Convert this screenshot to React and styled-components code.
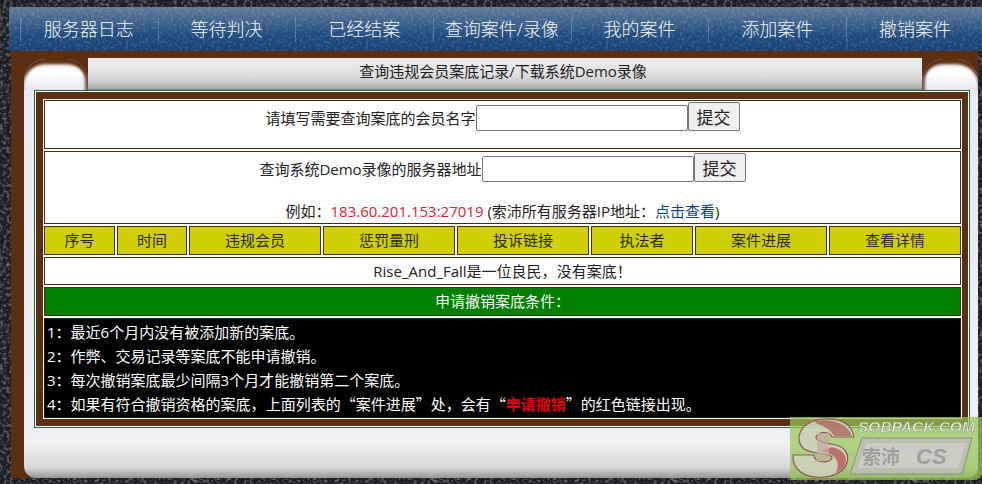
import React from "react";
import styled, { createGlobalStyle } from "styled-components";

const COLON = "\uFF1A";
const COMMA = "\uFF0C";
const BANG = "\uFF01";

const noise = (freq, alpha) =>
  `url("data:image/svg+xml,%3Csvg xmlns='http://www.w3.org/2000/svg' width='240' height='240'%3E%3Cfilter id='n'%3E%3CfeTurbulence type='fractalNoise' baseFrequency='${freq}' numOctaves='2' stitchTiles='stitch'/%3E%3CfeColorMatrix values='0 0 0 0 1 0 0 0 0 1 0 0 0 0 1 0 0 0 ${alpha} ${-alpha / 2.2}'/%3E%3C/filter%3E%3Crect width='240' height='240' filter='url(%23n)'/%3E%3C/svg%3E")`;

const GlobalStyle = createGlobalStyle`
  html, body {
    margin: 0;
    padding: 0;
  }
  body {
    background-color: #1d1d24;
    background-image: ${noise(0.3, 1)};
    font-family: "Open Sans", "Noto Sans CJK SC", sans-serif;
    font-size: 15px;
    color: #222;
  }
`;

const Page = styled.div`
  position: relative;
  width: 982px;
  height: 484px;
  overflow: hidden;
  padding: 7px 0 0 9px;
  box-sizing: border-box;
`;

const Nav = styled.nav`
  height: 44px;
  padding-left: 11px;
  display: grid;
  grid-template-columns: repeat(7, 137.7px);
  align-items: center;
  overflow: hidden;
  background-color: #2a5080;
  background-image: ${noise(0.35, 0.45)},
    linear-gradient(#5d7c9c 0%, #46688e 25%, #1f4a7e 65%, #1a4172 100%);
`;

const NavItem = styled.a`
  position: relative;
  text-align: center;
  color: #f4f8fc;
  font-size: 18px;
  font-weight: 300;
  line-height: 44px;

  &::before {
    content: "";
    position: absolute;
    left: 0;
    top: 11px;
    height: 24px;
    width: 1px;
    background: rgba(190, 210, 230, 0.3);
  }
`;

const Frame = styled.div`
  margin: 0 4px 0 2px;
  padding: 7px 0 0 13px;
  height: 420px;
  background: #5c2e12;
`;

const Panel = styled.div`
  height: 420px;
  border-radius: 0 0 10px 12px;
  background: linear-gradient(
    #e9e9f1 0,
    #eeeef4 375px,
    #f0f0f2 385px,
    #d6d6d8 410px,
    #9a9a9a 419px
  );
`;

const PanelHead = styled.div`
  display: flex;
  height: 32px;
  background: #5c2e12;
`;

const Corner = styled.div`
  flex: 0 0 ${(p) => p.$width}px;
  margin-top: 1px;
  border-radius: 22px 22px 0 0;
  background: linear-gradient(#c9c7c9 0, #fbfbfd 28%, #fff 45%, #e8e8f1 100%);
  box-shadow: inset 0 6px 3px -1px #5c2e12,
    inset ${(p) => (p.$right ? "5px" : "-5px")} 0 3px -2px #6f5a4e;
`;

const Title = styled.div`
  flex: 1;
  text-align: center;
  line-height: 27px;
  padding-right: 4px;
  color: #1c1c1c;
  background: linear-gradient(
    #efeaea 0,
    #e6e6e6 30%,
    #dadada 60%,
    #b4b4b4 92%,
    #70907c 100%
  );
`;

const Outer = styled.div`
  width: 936px;
  margin-left: 10px;
  box-sizing: border-box;
  border: 1px solid #1c6b45;
  background: #fff;
  padding: 1px;
`;

const Inner = styled.div`
  border: solid #5c2e12;
  border-width: 7px 6px 7px 7px;
  background: #fff;
  padding: 1px;
  display: flex;
  flex-direction: column;
  gap: 2px;
`;

const Row = styled.div`
  box-sizing: border-box;
  height: ${(p) => p.$height}px;
  border: 1px solid #4a2a10;
  background: ${(p) => p.$bg || "#fff"};
  color: ${(p) => p.$color || "#222"};
  text-align: center;
  line-height: ${(p) => p.$height - 2}px;
`;

const FormRow = styled(Row)`
  line-height: normal;
  padding-top: 1px;
`;

const Form = styled.div`
  display: flex;
  justify-content: center;
  align-items: flex-start;
  line-height: 24px;
`;

const Label = styled.span`
  padding-top: 4px;
`;

const Input = styled.input`
  box-sizing: border-box;
  width: 212px;
  height: 26px;
  margin: 3px 0 0;
  padding: 0 2px;
  border: 1px solid #767676;
  border-radius: 2px;
  background: #fff;
`;

const Button = styled.button`
  box-sizing: border-box;
  width: 52px;
  height: 29px;
  margin: 0;
  padding: 2px 0 0;
  border: 1px solid #767676;
  border-radius: 2px;
  background: #efefef;
  color: #222;
  font-family: inherit;
  font-size: 17px;
  line-height: 25px;
`;

const Example = styled.div`
  margin-top: 19px;
  line-height: 20px;
`;

const Ip = styled.span`
  color: #d81e30;
`;

const Link = styled.a`
  color: #0c3f96;
`;

const HeaderRow = styled.div`
  display: grid;
  grid-template-columns: 71px 70px 132px 132px 132px 102px 132px 132px;
  gap: 2px;
`;

const HeaderCell = styled.div`
  box-sizing: border-box;
  height: 29px;
  border: 1px solid #4a2a10;
  background: #cfcf00;
  color: #2a2a10;
  text-align: center;
  line-height: 27px;
`;

const Rules = styled.div`
  box-sizing: border-box;
  height: 100px;
  padding: 1px 0 0 2px;
  border: 1px solid #2a1a08;
  background: #000;
  color: #fff;
  line-height: 24px;
`;

const Warn = styled.b`
  color: #e6000c;
`;

const Quote = styled.span`
  font-family: "Noto Sans CJK SC", sans-serif;
`;

const Watermark = styled.div`
  position: absolute;
  left: 790px;
  top: 417px;
  width: 192px;
  height: 63px;
  border-radius: 0 0 8px 0;
  background: rgba(150, 200, 84, 0.72);

  & > svg {
    filter: blur(0.4px);
  }
`;

const navItems = [
  "服务器日志",
  "等待判决",
  "已经结案",
  "查询案件/录像",
  "我的案件",
  "添加案件",
  "撤销案件",
];

const columns = [
  "序号",
  "时间",
  "违规会员",
  "惩罚量刑",
  "投诉链接",
  "执法者",
  "案件进展",
  "查看详情",
];

const Logo = () => (
  <svg width="192" height="63" viewBox="0 0 192 63">
    <path
      d="M14 32 C4 24 8 4 34 2 C52 1 62 8 64 20 L42 20 C40 14 28 14 26 20 C25 24 36 26 46 28 C64 32 62 58 34 60 C14 62 2 52 3 38 L24 38 C24 46 40 47 42 41 C43 36 24 38 14 32 Z"
      fill="#d6d2c8"
      fillOpacity="0.75"
      stroke="#94505a"
      strokeWidth="1.2"
    />
    <path d="M24 4 C40 1 58 6 62 19 L44 19 C38 8 28 9 24 4 Z" fill="#a85a50" opacity="0.7" />
    <path d="M42 30 C60 34 60 50 46 56 C50 46 48 38 32 34 Z" fill="#b85050" opacity="0.75" />
    <rect x="27" y="16" width="12" height="28" fill="#c4a8a0" opacity="0.7" />
    <polygon points="72,21 182,21 172,57 60,57" fill="#bdbcb6" fillOpacity="0.85" stroke="#8d8b86" strokeWidth="1" />
    <polygon points="76,26 176,26 168,51 68,51" fill="#d2d0ca" fillOpacity="0.8" />
    <text x="68" y="15" fontFamily="Liberation Sans, sans-serif" fontSize="15.5" fontWeight="700" fontStyle="italic" fill="#ecefe4" stroke="#7e8a70" strokeWidth="0.5">
      SOBPACK.COM
    </text>
    <text x="72" y="47" fontFamily="Noto Sans CJK SC, sans-serif" fontSize="19" fontWeight="700" fill="#a09e98">
      索沛
    </text>
    <text x="126" y="47" fontFamily="Liberation Sans, sans-serif" fontSize="22" fontWeight="700" fontStyle="italic" fill="#a09e98">
      CS
    </text>
  </svg>
);

const App = () => (
  <Page>
    <GlobalStyle />
    <Nav>
      {navItems.map((item) => (
        <NavItem key={item}>{item}</NavItem>
      ))}
    </Nav>
    <Frame>
      <Panel>
        <PanelHead>
          <Corner $width={64} />
          <Title>查询违规会员案底记录/下载系统Demo录像</Title>
          <Corner $width={56} $right />
        </PanelHead>
        <Outer>
          <Inner>
            <FormRow $height={49}>
              <Form>
                <Label>请填写需要查询案底的会员名字</Label>
                <Input />
                <Button>提交</Button>
              </Form>
            </FormRow>
            <FormRow $height={73}>
              <Form>
                <Label>查询系统Demo录像的服务器地址</Label>
                <Input />
                <Button>提交</Button>
              </Form>
              <Example>
                例如{COLON}
                <Ip>183.60.201.153:27019</Ip> (索沛所有服务器IP地址{COLON}
                <Link>点击查看</Link>)
              </Example>
            </FormRow>
            <HeaderRow>
              {columns.map((col) => (
                <HeaderCell key={col}>{col}</HeaderCell>
              ))}
            </HeaderRow>
            <Row $height={28}>
              Rise_And_Fall是一位良民{COMMA}没有案底{BANG}
            </Row>
            <Row $height={29} $bg="#008000" $color="#fff">
              申请撤销案底条件{COLON}
            </Row>
            <Rules>
              <div>1{COLON}最近6个月内没有被添加新的案底。</div>
              <div>2{COLON}作弊、交易记录等案底不能申请撤销。</div>
              <div>3{COLON}每次撤销案底最少间隔3个月才能撤销第二个案底。</div>
              <div>
                4{COLON}如果有符合撤销资格的案底{COMMA}上面列表的
                <Quote>“</Quote>案件进展<Quote>”</Quote>处{COMMA}会有
                <Quote>“</Quote>
                <Warn>申请撤销</Warn>
                <Quote>”</Quote>的红色链接出现。
              </div>
            </Rules>
          </Inner>
        </Outer>
      </Panel>
    </Frame>
    <Watermark>
      <Logo />
    </Watermark>
  </Page>
);

export default App;
